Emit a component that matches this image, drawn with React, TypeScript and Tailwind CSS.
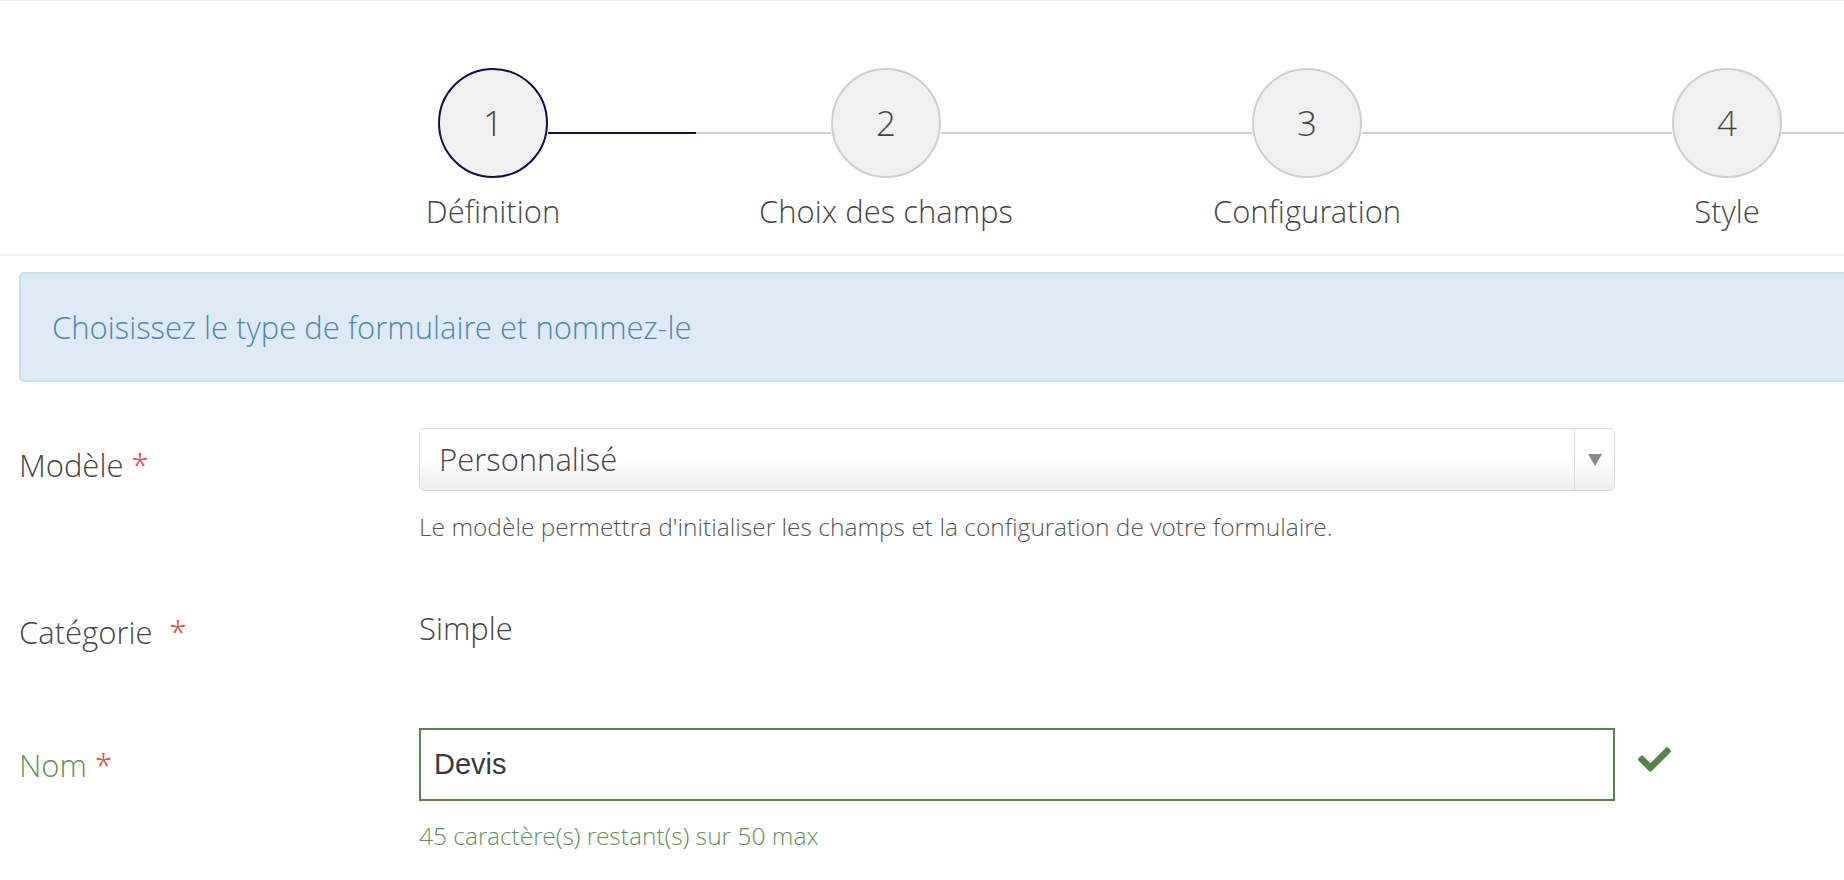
import { FaCheck } from "react-icons/fa";

const steps = [
  { n: 1, label: "Définition", active: true },
  { n: 2, label: "Choix des champs" },
  { n: 3, label: "Configuration" },
  { n: 4, label: "Style" },
];

function Step({ n, label, active }: { n: number; label: string; active?: boolean }) {
  return (
    <div className="flex w-[110px] shrink-0 flex-col items-center">
      <div
        className={
          "flex h-[110px] w-[110px] items-center justify-center rounded-full bg-[#f0f0f0] text-[35px] font-light text-[#444] " +
          (active ? "border-2 border-[#0f0f4d]" : "border-2 border-[#cfcfcf]")
        }
      >
        {n}
      </div>
      <div className="mt-[12px] whitespace-nowrap text-[31px] font-light leading-[42px] text-[#444]">{label}</div>
    </div>
  );
}

function Line({ className }: { className: string }) {
  return <div className={"mt-[64px] h-[2px] shrink-0 " + className} />;
}

export default function App() {
  return (
    <div className="h-[880px] w-[1844px] overflow-hidden bg-white font-['Open_Sans_Light','Open_Sans',sans-serif] text-[#444]">
      {/* Stepper */}
      <div className="border-t border-b-2 border-t-[#eee] border-b-[#f0f0f0] pt-[67px] pb-[22px]">
        <div className="flex items-start pl-[438px]">
          <Step {...steps[0]} />
          <Line className="w-[148px] bg-[#0f0f4d]" />
          <Line className="w-[135px] bg-[#cfcfcf]" />
          <Step {...steps[1]} />
          <Line className="w-[311px] bg-[#cfcfcf]" />
          <Step {...steps[2]} />
          <Line className="w-[310px] bg-[#cfcfcf]" />
          <Step {...steps[3]} />
          <Line className="flex-1 bg-[#cfcfcf]" />
        </div>
      </div>

      {/* Info */}
      <div className="mt-[16px] ml-[19px] flex h-[110px] w-[1860px] items-center rounded-[5px] border-2 border-[#c3e4ef] bg-[#deebf6] pl-[31px]">
        <span className="text-[31px] font-light text-[#4a87b2]">Choisissez le type de formulaire et nommez-le</span>
      </div>

      {/* Modèle */}
      <div className="mt-[46px] flex">
        <div className="w-[419px] shrink-0 pl-[19px] pt-[17px] text-[31px] font-light leading-[40px]">
          Modèle <span className="text-[#e0524b]">*</span>
        </div>
        <div className="w-[1196px] shrink-0">
          <div className="flex h-[63px] items-center rounded-[5px] border border-[#dcdcdc] bg-linear-to-b from-white from-50% to-[#ececec]">
            <span className="flex-1 pl-[19px] text-[31px] font-light">Personnalisé</span>
            <div className="flex h-full w-[40px] items-center justify-center border-l border-[#dcdcdc]">
              <svg width="14" height="12" viewBox="0 0 14 12">
                <path d="M0 0h14L7 12z" fill="#888" />
              </svg>
            </div>
          </div>
          <p className="mt-[21px] text-[24.5px] font-light leading-[30px] text-[#555]">
            Le modèle permettra d'initialiser les champs et la configuration de votre formulaire.
          </p>
        </div>
      </div>

      {/* Catégorie */}
      <div className="mt-[70px] flex">
        <div className="w-[419px] shrink-0 pl-[19px] text-[31px] font-light leading-[40px]">
          Catégorie <span className="ml-[9px] text-[#e0524b]">*</span>
        </div>
        <div className="text-[31px] font-light leading-[32px]">Simple</div>
      </div>

      {/* Nom */}
      <div className="mt-[76px] flex">
        <div className="w-[419px] shrink-0 pl-[19px] pt-[17px] text-[31px] font-light leading-[40px] text-[#5f9356]">
          Nom <span className="text-[#e0524b]">*</span>
        </div>
        <div className="w-[1196px] shrink-0">
          <div className="flex h-[73px] items-center border-2 border-[#55834a] pl-[13px] font-['Liberation_Sans',sans-serif] text-[29px] text-[#3a3a3a]">
            Devis
          </div>
          <p className="mt-[20px] text-[24.5px] font-light leading-[30px] text-[#5f9356]">
            45 caractère(s) restant(s) sur 50 max
          </p>
        </div>
        <div className="ml-[23px] pt-[15px]">
          <FaCheck size={33} color="#55834a" />
        </div>
      </div>
    </div>
  );
}
